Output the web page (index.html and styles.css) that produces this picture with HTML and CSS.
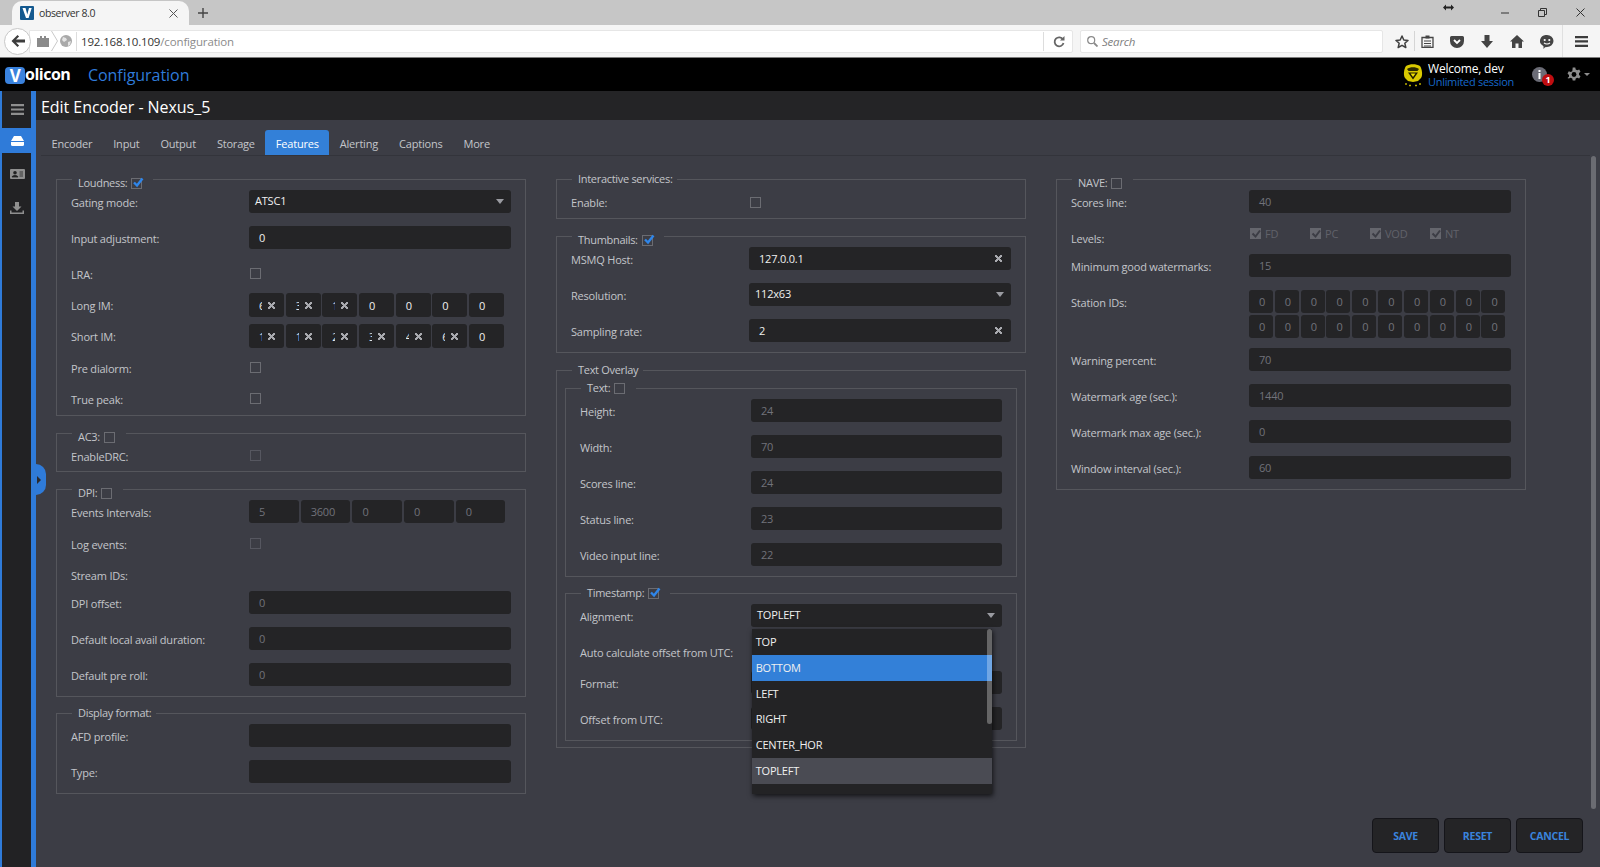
FILE: index.html
```html
<!DOCTYPE html>
<html lang="en">
<head>
<meta charset="utf-8">
<title>observer 8.0</title>
<link rel="stylesheet" href="styles.css">
</head>
<body>
<div class="tabstrip">
  <div class="btab">
    <span class="favicon"><svg width="14" height="14" viewBox="0 0 14 14"><rect width="14" height="14" rx="1" fill="#14598f"/><path d="M2.500 2h3L7.300 8.500 9 2h2.700L8.600 12H6z" fill="#fff"/></svg></span>
    <span class="btab-title">observer 8.0</span>
    <svg class="btab-close" width="9" height="9" viewBox="0 0 9 9"><path d="M.5.5l8 8M8.500.5l-8 8" stroke="#555" stroke-width="1"/></svg>
  </div>
  <svg class="newtab" width="10" height="10" viewBox="0 0 10 10"><path d="M5 0v10M0 5h10" stroke="#444" stroke-width="1.400"/></svg>
  <svg class="resize-cursor" width="11" height="7" viewBox="0 0 11 7"><path d="M0 3.500L3 .5v2h5v-2l3 3-3 3v-2H3v2z" fill="#222"/></svg>
  <div class="winctrls">
    <span class="winbtn"><svg width="8" height="2" viewBox="0 0 8 2"><path d="M0 1h8" stroke="#333" stroke-width="1"/></svg></span>
    <span class="winbtn"><svg width="9" height="9" viewBox="0 0 9 9"><path d="M.5 2.500h6v6h-6zM2.500 2.500v-2h6v6h-2" fill="none" stroke="#333"/></svg></span>
    <span class="winbtn"><svg width="9" height="9" viewBox="0 0 9 9"><path d="M.5.5l8 8M8.500.5l-8 8" stroke="#333" stroke-width="1"/></svg></span>
  </div>
</div>
<div class="toolbar">
  <span class="backbtn"><svg width="14" height="12" viewBox="0 0 14 12"><path d="M6.500 0L.5 6l6 6 1.600-1.600L5 7.400h9V4.600H5l3.100-3z" fill="#3d3d3d"/></svg></span>
  <div class="urlbar">
    <svg class="ico-jar" width="12" height="11" viewBox="0 0 12 11"><path d="M0 2h3V0h2v2h2V0h2v2h3v9H0z" fill="#8a8a8a"/></svg>
    <svg class="ico-chev" width="7" height="20" viewBox="0 0 7 20"><path d="M.5 0l6 10-6 10" fill="none" stroke="#c9c9c9"/></svg>
    <svg class="ico-globe" width="12" height="12" viewBox="0 0 12 12"><circle cx="6" cy="6" r="6" fill="#a9a9a9"/><path d="M3 2l3 1 1 2-3 2-2-2zM8 7l3-1-1 4-2 1z" fill="#e4e4e4"/></svg>
    <span class="urlsep"></span>
    <span class="url"><span class="url-host">192.168.10.109</span>/configuration</span>
    <span class="urlsep urlsep-end"></span>
    <svg class="ico-reload" width="12" height="12" viewBox="0 0 12 12"><path d="M10 3.500A4.500 4.500 0 1 0 10.500 7" fill="none" stroke="#666" stroke-width="1.800"/><path d="M7 4.500h4.500V0z" fill="#666"/></svg>
  </div>
  <div class="searchbar">
    <svg width="11" height="11" viewBox="0 0 11 11"><circle cx="4.200" cy="4.200" r="3.500" fill="none" stroke="#8a8a8a" stroke-width="1.200"/><path d="M7 7l3.500 3.500" stroke="#8a8a8a" stroke-width="1.800"/></svg>
    <span class="search-text">Search</span>
  </div>
  <span class="tb-icon tb-star"><svg width="14" height="14" viewBox="0 0 14 14"><path d="M7 1l1.800 4 4.200.4-3.200 2.800 1 4.300L7 10.300 3.200 12.500l1-4.300L1 5.400 5.200 5z" fill="none" stroke="#3f3f3f" stroke-width="1.500" stroke-linejoin="round"/></svg></span>
  <span class="tb-icon tb-clip"><svg width="13" height="13" viewBox="0 0 13 13"><path d="M1 2.500h11V12.500H1z" fill="none" stroke="#444" stroke-width="1.300"/><path d="M4.500.5h4v3h-4z" fill="#444"/><path d="M3 6h7M3 8.500h7M3 11h7" stroke="#444"/></svg></span>
  <span class="tb-icon tb-pocket"><svg width="14" height="12" viewBox="0 0 14 12"><path d="M1.500 0h11A1.500 1.500 0 0 1 14 1.500V5a7 7 0 0 1-14 0V1.500A1.500 1.500 0 0 1 1.500 0z" fill="#444"/><path d="M4 4l3 3 3-3" fill="none" stroke="#fff" stroke-width="1.800"/></svg></span>
  <span class="tb-icon"><svg width="12" height="13" viewBox="0 0 12 13"><path d="M3.500 0h5v6H12l-6 7-6-7h3.500z" fill="#444"/></svg></span>
  <span class="tb-icon"><svg width="14" height="13" viewBox="0 0 14 13"><path d="M7 0l7 6.500h-2V13H8.500V8.500h-3V13H2V6.500H0z" fill="#444"/></svg></span>
  <span class="tb-icon"><svg width="14" height="14" viewBox="0 0 14 14"><path d="M7 0a6.500 6 0 0 1 0 12l-2 .2L3.500 14v-2.700A6.500 6 0 0 1 7 0z" fill="#444"/><circle cx="4.700" cy="5" r="1.100" fill="#fff"/><circle cx="9.300" cy="5" r="1.100" fill="#fff"/><path d="M4 7.800c1.500 1.500 4.500 1.500 6 0" fill="none" stroke="#fff" stroke-width="1.100"/></svg></span>
  <span class="tb-divider"></span>
  <span class="tb-menu"><svg width="13" height="11" viewBox="0 0 13 11"><path d="M0 0h13v2.300H0zM0 4.300h13v2.300H0zM0 8.700h13V11H0z" fill="#3c3c3c"/></svg></span>
</div>
<header class="apphead">
  <div class="logo"><span class="logo-v">V</span><span class="logo-rest">olicon</span></div>
  <div class="apptitle">Configuration</div>
  <div class="userbox">
    <svg class="avatar" width="20" height="24" viewBox="0 0 20 24"><path d="M3 3C1 6 0 12 2 15l3 3 5 1 5-1 3-3c2-3 1-9-1-12C13 .5 7 .5 3 3z" fill="#d9c900"/><path d="M4 6c3-2.500 9-2.500 12 0l-1.500 2h-9z" fill="#2e2a00"/><path d="M5 9.500h10l-5 7z" fill="#1d1b00"/><path d="M7.500 10.500h5l-2.500 3.500z" fill="#f2e400"/><path d="M2 21h2M6 22.500h2M12 22.500h2M16 21h2" stroke="#b8aa00" stroke-width="1.600"/></svg>
    <div class="usertext"><div class="welcome">Welcome, dev</div><div class="session">Unlimited session</div></div>
    <div class="infobox">
      <svg width="15" height="15" viewBox="0 0 15 15"><circle cx="7.500" cy="7.500" r="7.500" fill="#6b6c76"/><path d="M6.500 3h2v2h-2zM6.500 6h2v6h-2z" fill="#fff"/></svg>
      <span class="badge">1</span>
    </div>
    <svg class="gear" width="14" height="15" viewBox="0 0 14 15"><path d="M5.700 0h2.600l.4 2 1.600.8 1.900-.8 1.300 2.300-1.500 1.300v1.800l1.500 1.300-1.300 2.300-1.900-.8-1.600.8-.4 2H5.700l-.4-2-1.600-.8-1.900.8L.5 10.500 2 9.200V7.400L.5 6.100l1.300-2.300 1.900.8 1.600-.8z" transform="translate(0 .5)" fill="#8d8d8d"/><circle cx="7" cy="7.500" r="2.400" fill="#000"/></svg>
    <svg class="caret" width="6" height="3" viewBox="0 0 6 3"><path d="M0 0h6L3 3z" fill="#8d8d8d"/></svg>
  </div>
</header>
<div class="app">
  <nav class="sidebar">
    <div class="side-item side-menu"><svg width="13" height="11" viewBox="0 0 13 11"><path d="M0 0h13v2.200H0zM0 4.400h13v2.200H0zM0 8.800h13V11H0z" fill="#8f8f8f"/></svg></div>
    <div class="side-item side-active"><svg width="13" height="10" viewBox="0 0 13 10"><path d="M3 0h7l3 5v3.500A1.500 1.500 0 0 1 11.500 10h-10A1.500 1.500 0 0 1 0 8.500V5z" fill="#fff"/><path d="M0 5.500h13" stroke="#2f7bd9"/></svg></div>
    <div class="side-item side-card"><svg width="15" height="10" viewBox="0 0 15 10"><path d="M1 0h13a1 1 0 0 1 1 1v8a1 1 0 0 1-1 1H1a1 1 0 0 1-1-1V1a1 1 0 0 1 1-1z" fill="#8f8f8f"/><circle cx="5" cy="3.800" r="1.800" fill="#222"/><path d="M2 8c.5-2 5.500-2 6 0zM9.500 3h3.500M9.500 5h3.500M9.500 7h3.500" fill="#222" stroke="#222" stroke-width=".8"/></svg></div>
    <div class="side-item side-dl"><svg width="14" height="12" viewBox="0 0 14 12"><path d="M5 0h4v4.500h2.500L7 9 2.500 4.500H5zM0 8.500h1.500v2h11v-2H14V12H0z" fill="#8f8f8f"/></svg></div>
    <div class="side-handle"><svg width="4" height="8" viewBox="0 0 4 8"><path d="M0 0l4 4-4 4z" fill="#2a2a30"/></svg></div>
  </nav>
  <main class="main">
    <h1 class="pagetitle">Edit Encoder - Nexus_5</h1>
    <div class="tabs">
      <span class="tab">Encoder</span>
      <span class="tab">Input</span>
      <span class="tab">Output</span>
      <span class="tab">Storage</span>
      <span class="tab tab-active">Features</span>
      <span class="tab">Alerting</span>
      <span class="tab">Captions</span>
      <span class="tab">More</span>
    </div>
    <div class="content">
      <div class="forms">
        <div class="col">
          <fieldset class="group">
            <legend class="lg-low">Loudness:<span class="cb cb-on"><svg viewBox="0 0 12 12" width="12" height="12"><path d="M2 5.500l3 3L10.500 1.500" fill="none" stroke="#2f86ea" stroke-width="2.400"/></svg></span></legend>
            <div class="row"><label>Gating mode:</label><div class="field field-select"><span>ATSC1</span><i class="arrow"></i></div></div>
            <div class="row"><label>Input adjustment:</label><div class="field">0</div></div>
            <div class="row row-check h31"><label>LRA:</label><span class="cb"></span></div>
            <div class="row row-chips h31"><label>Long IM:</label>
              <div class="chips">
                <div class="chip chip-x"><span class="clip">6</span><i class="x"></i></div>
                <div class="chip chip-x"><span class="clip">3</span><i class="x"></i></div>
                <div class="chip chip-x"><span class="clip">1</span><i class="x"></i></div>
                <div class="chip">0</div><div class="chip">0</div><div class="chip">0</div><div class="chip">0</div>
              </div>
            </div>
            <div class="row row-chips h32"><label>Short IM:</label>
              <div class="chips">
                <div class="chip chip-x"><span class="clip">1</span><i class="x"></i></div>
                <div class="chip chip-x"><span class="clip">1</span><i class="x"></i></div>
                <div class="chip chip-x"><span class="clip">2</span><i class="x"></i></div>
                <div class="chip chip-x"><span class="clip">3</span><i class="x"></i></div>
                <div class="chip chip-x"><span class="clip">4</span><i class="x"></i></div>
                <div class="chip chip-x"><span class="clip">6</span><i class="x"></i></div>
                <div class="chip">0</div>
              </div>
            </div>
            <div class="row row-check h31"><label>Pre dialorm:</label><span class="cb"></span></div>
            <div class="row row-check h18"><label>True peak:</label><span class="cb"></span></div>
          </fieldset>
          <fieldset class="group">
            <legend class="lg-low">AC3:<span class="cb"></span></legend>
            <div class="row row-check h17"><label>EnableDRC:</label><span class="cb cb-off"></span></div>
          </fieldset>
          <fieldset class="group">
            <legend class="lg-low">DPI:<span class="cb"></span></legend>
            <div class="row h32"><label>Events Intervals:</label>
              <div class="chips chips-wide">
                <div class="chip dis">5</div><div class="chip dis">3600</div><div class="chip dis">0</div><div class="chip dis">0</div><div class="chip dis">0</div>
              </div>
            </div>
            <div class="row row-check h31"><label>Log events:</label><span class="cb cb-off"></span></div>
            <div class="row h28"><label>Stream IDs:</label></div>
            <div class="row"><label>DPI offset:</label><div class="field dis">0</div></div>
            <div class="row"><label>Default local avail duration:</label><div class="field dis">0</div></div>
            <div class="row"><label>Default pre roll:</label><div class="field dis">0</div></div>
          </fieldset>
          <fieldset class="group group-tight">
            <legend>Display format:</legend>
            <div class="row"><label>AFD profile:</label><div class="field"></div></div>
            <div class="row"><label>Type:</label><div class="field"></div></div>
          </fieldset>
        </div>
        <div class="col">
          <fieldset class="group">
            <legend>Interactive services:</legend>
            <div class="row row-check h18"><label>Enable:</label><span class="cb cb-low"></span></div>
          </fieldset>
          <fieldset class="group">
            <legend class="lg-low">Thumbnails:<span class="cb cb-on"><svg viewBox="0 0 12 12" width="12" height="12"><path d="M2 5.500l3 3L10.500 1.500" fill="none" stroke="#2f86ea" stroke-width="2.400"/></svg></span></legend>
            <div class="row"><label>MSMQ Host:</label><div class="field field-clear"><span>127.0.0.1</span><i class="x"></i></div></div>
            <div class="row"><label>Resolution:</label><div class="field field-select"><span>112x63</span><i class="arrow"></i></div></div>
            <div class="row"><label>Sampling rate:</label><div class="field field-clear"><span>2</span><i class="x"></i></div></div>
          </fieldset>
          <fieldset class="group group-outer">
            <legend>Text Overlay</legend>
            <fieldset class="group group-inner group-first">
              <legend>Text:<span class="cb"></span></legend>
              <div class="row"><label>Height:</label><div class="field dis">24</div></div>
              <div class="row"><label>Width:</label><div class="field dis">70</div></div>
              <div class="row"><label>Scores line:</label><div class="field dis">24</div></div>
              <div class="row"><label>Status line:</label><div class="field dis">23</div></div>
              <div class="row"><label>Video input line:</label><div class="field dis">22</div></div>
            </fieldset>
            <fieldset class="group group-inner">
              <legend>Timestamp:<span class="cb cb-on"><svg viewBox="0 0 12 12" width="12" height="12"><path d="M2 5.500l3 3L10.500 1.500" fill="none" stroke="#2f86ea" stroke-width="2.400"/></svg></span></legend>
              <div class="row"><label>Alignment:</label>
                <div class="selectwrap">
                  <div class="field field-select"><span>TOPLEFT</span><i class="arrow"></i></div>
                  <ul class="dropdown">
                    <li>TOP</li>
                    <li class="opt-blue">BOTTOM</li>
                    <li>LEFT</li>
                    <li>RIGHT</li>
                    <li>CENTER_HOR</li>
                    <li class="opt-hover">TOPLEFT</li>
                    <li></li>
                  </ul>
                </div>
              </div>
              <div class="row row-check h31"><label>Auto calculate offset from UTC:</label><span class="cb"></span></div>
              <div class="row"><label>Format:</label><div class="field"></div></div>
              <div class="row"><label>Offset from UTC:</label><div class="field"></div></div>
            </fieldset>
          </fieldset>
        </div>
        <div class="col">
          <fieldset class="group">
            <legend class="lg-low">NAVE:<span class="cb"></span></legend>
            <div class="row"><label>Scores line:</label><div class="field dis">40</div></div>
            <div class="row h28"><label>Levels:</label>
              <div class="levels">
                <span class="level"><span class="cb cb-dis"><svg viewBox="0 0 12 12" width="12" height="12"><path d="M2.500 5.500l3 3 4.500-6" fill="none" stroke="#3c3d45" stroke-width="2"/></svg></span>FD</span>
                <span class="level"><span class="cb cb-dis"><svg viewBox="0 0 12 12" width="12" height="12"><path d="M2.500 5.500l3 3 4.500-6" fill="none" stroke="#3c3d45" stroke-width="2"/></svg></span>PC</span>
                <span class="level"><span class="cb cb-dis"><svg viewBox="0 0 12 12" width="12" height="12"><path d="M2.500 5.500l3 3 4.500-6" fill="none" stroke="#3c3d45" stroke-width="2"/></svg></span>VOD</span>
                <span class="level"><span class="cb cb-dis"><svg viewBox="0 0 12 12" width="12" height="12"><path d="M2.500 5.500l3 3 4.500-6" fill="none" stroke="#3c3d45" stroke-width="2"/></svg></span>NT</span>
              </div>
            </div>
            <div class="row"><label>Minimum good watermarks:</label><div class="field dis">15</div></div>
            <div class="row h58"><label>Station IDs:</label>
              <div class="stations">
                <div class="chip dis">0</div><div class="chip dis">0</div><div class="chip dis">0</div><div class="chip dis">0</div><div class="chip dis">0</div><div class="chip dis">0</div><div class="chip dis">0</div><div class="chip dis">0</div><div class="chip dis">0</div><div class="chip dis">0</div>
                <div class="chip dis">0</div><div class="chip dis">0</div><div class="chip dis">0</div><div class="chip dis">0</div><div class="chip dis">0</div><div class="chip dis">0</div><div class="chip dis">0</div><div class="chip dis">0</div><div class="chip dis">0</div><div class="chip dis">0</div>
              </div>
            </div>
            <div class="row"><label>Warning percent:</label><div class="field dis">70</div></div>
            <div class="row"><label>Watermark age (sec.):</label><div class="field dis">1440</div></div>
            <div class="row"><label>Watermark max age (sec.):</label><div class="field dis">0</div></div>
            <div class="row"><label>Window interval (sec.):</label><div class="field dis">60</div></div>
          </fieldset>
        </div>
      </div>
      <div class="scrollthumb"></div>
    </div>
    <div class="actions">
      <button class="action">SAVE</button>
      <button class="action">RESET</button>
      <button class="action">CANCEL</button>
    </div>
  </main>
</div>
</body>
</html>
```
FILE: styles.css
```css
* { box-sizing: border-box; }
html, body { margin: 0; height: 100%; }
body {
  width: 1600px; height: 867px; overflow: hidden;
  display: flex; flex-direction: column;
  background: #3c3d45; color: #c3c5ca;
  font: 11px/1.2 "Open Sans", "Noto Sans", sans-serif;
  letter-spacing: -.2px;
}
svg { display: block; }

/* browser chrome */
.tabstrip { height: 25px; background: #c6c6c6; display: flex; align-items: center; position: relative; flex: none; }
.btab { width: 177px; height: 24px; margin: 1px 0 0 12px; background: #f5f5f5; border-radius: 10px 10px 0 0; display: flex; align-items: center; padding-left: 8px; color: #333; font-size: 10.500px; }
.favicon { margin-right: 5px; }
.btab-title { letter-spacing: -.4px; }
.btab-close { margin-left: auto; margin-right: 11px; }
.newtab { margin-left: 9px; }
.resize-cursor { position: absolute; left: 1443px; top: 4px; }
.winctrls { margin-left: auto; display: flex; padding-right: 1px; }
.winbtn { width: 37.500px; height: 25px; display: flex; align-items: center; justify-content: center; }

.toolbar { height: 33px; background: #f5f5f5; border-bottom: 1px solid #7c7c7c; display: flex; align-items: center; padding-left: 4px; flex: none; }
.backbtn { width: 27px; height: 27px; border-radius: 50%; background: #fff; border: 1px solid #c8c8c8; display: flex; align-items: center; justify-content: center; position: relative; z-index: 1; flex: none; }
.urlbar { width: 1045px; height: 23px; margin-left: -2px; background: #fff; border: 1px solid #e6e6e6; border-radius: 0 2px 2px 0; display: flex; align-items: center; padding-left: 7px; }
.ico-chev { margin-left: 2px; }
.ico-globe { margin-left: 2px; }
.urlsep { width: 1px; height: 19px; background: #ddd; margin-left: 4px; }
.url { margin-left: 4px; padding-top: 2px; font-size: 11.500px; color: #8b8b8b; letter-spacing: -.15px; }
.url-host { color: #333; }
.urlsep-end { margin-left: auto; }
.ico-reload { margin: 1px 7px 0 9px; }
.searchbar { width: 303px; height: 23px; margin-left: 7px; background: #fff; border: 1px solid #e6e6e6; border-radius: 2px; display: flex; align-items: center; padding-left: 6px; flex: none; }
.search-text { margin-left: 4px; padding-top: 2px; font-style: italic; color: #808080; font-size: 11.500px; }
.tb-icon { width: 30px; display: flex; justify-content: center; flex: none; padding-top: 1px; }
.tb-star { width: 31px; padding-right: 6px; margin-left: 6px; position: relative; }
.tb-star::after { content: ""; position: absolute; right: 5px; top: -3px; height: 20px; width: 1px; background: #d5d5d5; }
.tb-clip { width: 24px; margin-left: -5px; margin-right: 3px; }
.tb-divider { width: 1px; height: 32px; background: #e0e0e0; flex: none; }
.tb-menu { width: 37px; display: flex; justify-content: center; flex: none; padding-top: 1px; }

/* app header */
.apphead { height: 33px; background: #000; display: flex; align-items: center; padding-left: 5px; flex: none; }
.logo { display: flex; align-items: center; width: 83px; font-weight: 700; color: #fff; font-size: 16px; letter-spacing: -.5px; padding-top: 1px; }
.logo-v { width: 20px; height: 17px; border-radius: 4px; background: #3a82dd; line-height: 17px; text-align: center; font-size: 17px; }
.apptitle { color: #2f7bd9; font-size: 16px; letter-spacing: -.05px; padding-top: 2px; }
.userbox { margin-left: auto; display: flex; align-items: center; }
.usertext { width: 86px; margin-left: 5px; line-height: 13px; white-space: nowrap; }
.welcome { color: #fff; font-size: 12px; }
.session { color: #1768c9; font-size: 11px; letter-spacing: -.3px; }
.infobox { position: relative; margin-left: 18px; }
.badge { position: absolute; left: 10px; top: 7px; width: 12px; height: 12px; border-radius: 50%; background: #c00d10; color: #fff; font-size: 9px; line-height: 12px; text-align: center; font-weight: 700; }
.gear { margin-left: 20px; }
.caret { margin: 0 10px 0 3px; }

/* app */
.app { flex: 1; display: flex; min-height: 0; }
.sidebar { width: 36px; flex: none; background: #222224; border-left: 2px solid #2f7bd9; border-right: 5px solid #2f7bd9; position: relative; }
.side-item { display: flex; align-items: center; justify-content: center; padding-left: 1px; }
.side-menu { height: 37px; border-radius: 0 0 3px 3px; }
.side-active { height: 25px; background: #2f7bd9; margin: 0 -5px 0 -2px; padding: 0 2px 0 0; }
.side-card { height: 42px; }
.side-dl { height: 26px; }
.side-handle { position: absolute; left: 34px; top: 373px; width: 10px; height: 31px; background: #2f7bd9; border-radius: 0 16px 16px 0; display: flex; align-items: center; padding-left: 1px; }

.main { flex: 1; min-width: 0; display: flex; flex-direction: column; }
.pagetitle { margin: 0; height: 29px; background: #242426; color: #fff; font-size: 16px; font-weight: 400; line-height: 32px; padding-left: 5px; flex: none; letter-spacing: -.05px; }
.tabs { display: flex; height: 26px; margin: 10px 10px 0 5px; border-bottom: 1px solid #33343b; flex: none; }
.tab { padding: 1px 10.500px 0; line-height: 26px; color: #c3c5ca; }
.tab-active { background: #3380d8; color: #fff; border-radius: 3px 3px 0 0; }

.content { flex: 1; min-height: 0; position: relative; padding: 13px 0 0 20px; }
.forms { display: grid; grid-template-columns: repeat(3, 470px); column-gap: 30px; align-items: start; }
.col { display: flex; flex-direction: column; gap: 7px; }
.scrollthumb { position: absolute; right: 4px; top: 0; width: 5px; height: 653px; background: #6b6c72; border-radius: 3px; }

.actions { display: flex; justify-content: flex-end; gap: 5px; padding: 0 17px 14px 0; flex: none; }
.action { width: 67px; height: 35px; background: #242426; border: 1px solid #15151a; border-radius: 4px; color: #3a83dc; font: 700 10.500px "Open Sans", sans-serif; letter-spacing: -.25px; padding: 0; }

/* form groups */
.group { margin: 0; min-width: 0; border: 1px solid #55565c; padding: 1px 14px 10px; }
.group-tight { margin-top: -1px; }
legend { padding: 0 5px 0 6px; margin-left: 1px; line-height: 20px; height: 20px; display: flex; align-items: center; letter-spacing: -.3px; }
legend .cb { margin: 0 6px 0 4px; }
.lg-low { padding-top: 8px; }
.group-outer { padding: 0 8px 6px; }
.group-outer > legend { margin-left: 7px; }
.group-inner { margin-top: 6px; padding: 1px 14px 10px; }
.group-first { margin-top: -2px; }
.group-inner .row { grid-template-columns: 171px 1fr; }

.row { display: grid; grid-template-columns: 178px 1fr; height: 36px; align-items: start; }
.row:last-child { height: 23px; }
.row.h17, .row.h17:last-child { height: 17px; }
.row.h18, .row.h18:last-child { height: 18px; }
.row.h28 { height: 28px; }
.row.h30 { height: 30px; }
.row.h31 { height: 31px; }
.row.h32 { height: 32px; }
.row.h58 { height: 58px; }
label { line-height: 26px; white-space: nowrap; }

.field { height: 23px; background: #242426; border-radius: 3px; padding-left: 10px; color: #f0f0f0; line-height: 22px; display: flex; align-items: center; position: relative; }
.dis { color: #71727a; }
.field-select { padding: 0 0 2px 6px; }
.field-select .arrow { position: absolute; right: 7px; top: 9px; width: 0; height: 0; border-left: 4px solid transparent; border-right: 4px solid transparent; border-top: 5px solid #9a9ba1; }
.x { display: block; width: 7px; height: 7px; background:
  linear-gradient(45deg, transparent 40%, #a8a9ae 40%, #a8a9ae 60%, transparent 60%),
  linear-gradient(-45deg, transparent 40%, #a8a9ae 40%, #a8a9ae 60%, transparent 60%); }
.field-clear .x { position: absolute; right: 9px; top: 8px; }

.chips { display: flex; gap: 1.670px; }
.chip { width: 35px; height: 24px; background: #242426; border-radius: 3px; padding-left: 10px; color: #f0f0f0; line-height: 23px; flex: none; display: flex; align-items: center; }
.chip.dis { color: #71727a; }
.chip-x .clip { width: 3px; overflow: hidden; }
.chip-x .x { margin-left: 6px; }
.chips-wide { gap: 2px; }
.chips-wide .chip { width: 49.700px; height: 23px; }
.stations { display: grid; grid-template-columns: repeat(10, 24px); gap: 2px 1.830px; }
.stations .chip { width: 24px; height: 23px; }

.cb { display: block; width: 11px; height: 11px; border: 1px solid #6b6c72; position: relative; flex: none; }
.row > .cb { margin: 6px 0 0 1px; }
.row > .cb-low { margin-top: 7px; }
.cb-off { border-color: #565760; }
.cb svg { position: absolute; left: 0; top: -2px; }
.levels { display: flex; margin-top: 2px; }
.level { width: 60px; display: flex; align-items: center; color: #61626a; height: 11px; padding-left: 1px; }
.cb-dis { margin: 0 4px 0 0; background: #65666d; border-color: #65666d; }
.cb-dis svg { top: -1px; left: -1px; }

/* dropdown */
.selectwrap { position: relative; }
.dropdown { list-style: none; margin: 0; padding: 0; position: absolute; left: .700px; top: 25px; width: 240px; height: 165px; overflow: hidden; background: #232325; box-shadow: 1px 2px 5px rgba(0,0,0,.7); z-index: 5; }
.dropdown li { height: 25.800px; line-height: 25.800px; padding-left: 4px; color: #f0f0f0; }
.dropdown .opt-blue { background: #3380d8; }
.dropdown .opt-hover { background: #4a4b53; }
.dropdown::after { content: ""; position: absolute; right: 0; top: 0; width: 5px; height: 95px; border-radius: 3px; background: rgba(255,255,255,.3); }
```
